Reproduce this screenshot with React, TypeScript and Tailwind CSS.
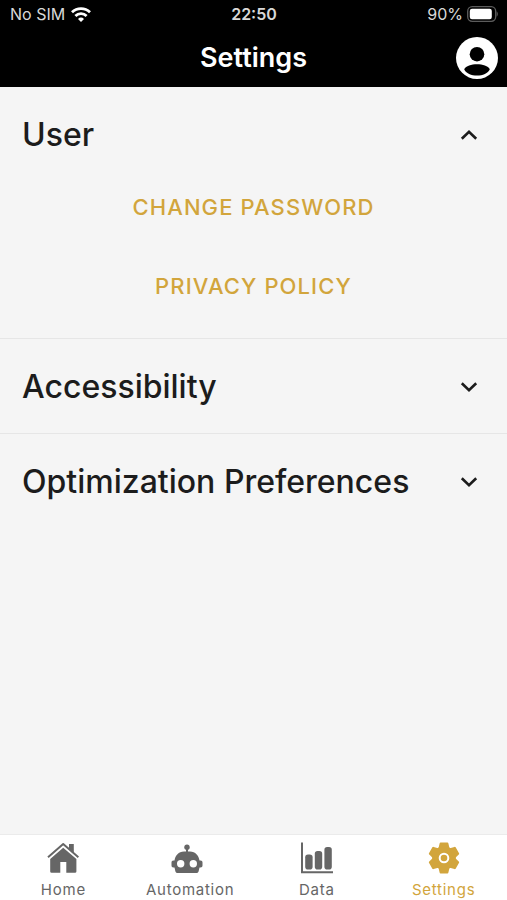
import { useState } from 'react';
import type { ReactNode } from 'react';
import { clsx } from 'clsx';

const WifiIcon = () => (
  <svg viewBox="0 0 20 15" className="h-[15px] w-5" fill="none" stroke="currentColor" strokeWidth="2.8">
    <path d="M1 5.3a13 13 0 0 1 18 0" />
    <path d="M4.4 9a8 8 0 0 1 11.2 0" />
    <path d="M10 15 7 12a4.3 4.3 0 0 1 6 0Z" fill="currentColor" stroke="none" />
  </svg>
);

const BatteryIcon = () => (
  <svg viewBox="0 0 31 16" className="h-4 w-[31px]">
    <rect x="0.7" y="0.7" width="28" height="14.6" rx="4.5" fill="none" stroke="#5c5c5c" strokeWidth="1.3" />
    <rect x="2.8" y="2.8" width="22" height="10.4" rx="2.2" fill="#fff" />
    <path d="M29.6 5.4c1.6.6 1.6 4.6 0 5.2Z" fill="#5c5c5c" />
  </svg>
);

const AccountIcon = () => (
  <svg viewBox="0 0 42 42" className="size-[42px]">
    <circle cx="21" cy="21" r="21" fill="#fff" />
    <circle cx="21" cy="17.2" r="7.3" fill="#000" />
    <path d="M8.2 32.2C11.5 25.7 30.5 25.7 33.8 32.2 30.5 40.6 11.5 40.6 8.2 32.2Z" fill="#000" />
  </svg>
);

const ChevronIcon = ({ open }: { open: boolean }) => (
  <svg
    viewBox="0 0 18 12"
    className={clsx('h-3 w-[18px]', open && 'rotate-180')}
    fill="none"
    stroke="currentColor"
    strokeWidth="2.6"
  >
    <path d="M1.8 2.3 9 9.3l7.2-7" />
  </svg>
);

const HomeIcon = () => (
  <svg viewBox="0 0 32 32" className="size-8" fill="currentColor">
    <path d="M22 2h4.8v9l-4.8-4Z" />
    <path d="M1 15.2 16.2 2 31.4 15.2" fill="none" stroke="currentColor" strokeWidth="2" strokeLinejoin="round" />
    <path d="M16.2 5.8 29.4 17V29.4a1.4 1.4 0 0 1-1.4 1.4H19.3V20H13.3V30.8H4.6a1.4 1.4 0 0 1-1.4-1.4V17Z" />
  </svg>
);

const RobotIcon = () => (
  <svg viewBox="0 0 32 32" className="mr-[6px] size-8" fill="currentColor">
    <circle cx="16" cy="5.2" r="2.7" />
    <path d="M15 7h2v4h-2Z" />
    <path
      fillRule="evenodd"
      d="M13 9.6h6c5.4 0 8.8 4.2 9.5 9h1c1.4 0 2 .7 2 2v3c0 1.3-.6 2-2 2h-1l-.8 3.4c-.4 1.4-1.1 2-2.3 2H6.6c-1.2 0-1.9-.6-2.3-2l-.8-3.4h-1c-1.4 0-2-.7-2-2v-3c0-1.3.6-2 2-2h1C4.2 13.8 7.6 9.6 13 9.6ZM9.7 18a3.7 3.7 0 1 0 0 7.4 3.7 3.7 0 0 0 0-7.4Zm12.6 0a3.7 3.7 0 1 0 0 7.4 3.7 3.7 0 0 0 0-7.4Z"
    />
  </svg>
);

const ChartIcon = () => (
  <svg viewBox="0 0 32 32" className="size-8" fill="currentColor">
    <path d="M0 .5h2V29.2h31v2H0Z" />
    <rect x="4.2" y="12.4" width="7.4" height="15.2" rx="2.8" />
    <rect x="13.8" y="9" width="7.4" height="18.6" rx="2.8" />
    <rect x="23.4" y="5" width="7.4" height="22.6" rx="2.8" />
  </svg>
);

const GearIcon = () => (
  <svg viewBox="0 0 32 32" className="size-8" fill="currentColor">
    <circle cx="16" cy="16" r="11.8" />
    {[0, 60, 120, 180, 240, 300].map((angle) => (
      <path
        key={angle}
        d="M12.6.6h6.8q.8 0 1 .9l1.3 5.5h-11.4l1.3-5.5q.2-.9 1-.9Z"
        transform={`rotate(${angle} 16 16)`}
      />
    ))}
    <circle cx="16" cy="16" r="4.3" fill="none" stroke="#fff" strokeWidth="2" />
  </svg>
);

const tabs = [
  { name: 'Home', icon: HomeIcon },
  { name: 'Automation', icon: RobotIcon },
  { name: 'Data', icon: ChartIcon },
  { name: 'Settings', icon: GearIcon },
];

interface SectionProps {
  title: string;
  open: boolean;
  onToggle: () => void;
  children?: ReactNode;
}

const Section = ({ title, open, onToggle, children }: SectionProps) => (
  <section className="border-b border-[#e6e6e6] last:border-b-0">
    <h2>
      <button
        type="button"
        aria-expanded={open}
        onClick={onToggle}
        className="flex w-full items-center justify-between pt-7 pr-[29px] pb-[26px] pl-[22px] text-left text-[32px] leading-10 font-medium"
      >
        {title}
        <ChevronIcon open={open} />
      </button>
    </h2>
    {open && children}
  </section>
);

export default function App() {
  const [openSections, setOpenSections] = useState(['User']);
  const [activeTab, setActiveTab] = useState('Settings');

  const sectionProps = (title: string) => ({
    title,
    open: openSections.includes(title),
    onToggle: () =>
      setOpenSections((current) =>
        current.includes(title) ? current.filter((item) => item !== title) : [...current, title],
      ),
  });

  return (
    <div className="flex min-h-screen flex-col bg-[#f5f5f5] font-['Inter',sans-serif] text-[#1c1c1c]">
      <header className="bg-black pb-2 text-white">
        <div className="grid grid-cols-3 items-center pt-1 pr-[9px] pl-[10px] text-base leading-5 text-[#d8d8d8]">
          <div className="flex items-center gap-[6px]">
            <span>No SIM</span>
            <span className="text-white">
              <WifiIcon />
            </span>
          </div>
          <span className="text-center font-semibold">22:50</span>
          <div className="flex items-center justify-end gap-1">
            <span>90%</span>
            <BatteryIcon />
          </div>
        </div>
        <div className="grid grid-cols-[1fr_auto_1fr] items-center pt-[13px] pr-[9px] pl-[9px]">
          <h1 className="col-start-2 text-[27px] leading-8 font-semibold">Settings</h1>
          <button type="button" aria-label="Account" className="justify-self-end">
            <AccountIcon />
          </button>
        </div>
      </header>

      <main className="flex-1">
        <Section {...sectionProps('User')}>
          <div className="flex flex-col items-center gap-[27px] pb-[26px]">
            <button type="button" className="px-4 py-3 text-[22px] leading-7 font-medium tracking-wider text-[#d2a53c] uppercase">
              Change password
            </button>
            <button type="button" className="px-4 py-3 text-[22px] leading-7 font-medium tracking-wider text-[#d2a53c] uppercase">
              Privacy policy
            </button>
          </div>
        </Section>
        <Section {...sectionProps('Accessibility')} />
        <Section {...sectionProps('Optimization Preferences')} />
      </main>

      <nav className="grid grid-cols-4 border-t border-[#ebebeb] bg-white">
        {tabs.map(({ name, icon: Icon }) => (
          <button
            key={name}
            type="button"
            onClick={() => setActiveTab(name)}
            className={clsx(
              'flex flex-col items-center gap-[6px] pt-[7px] text-[15px] leading-5 tracking-wider',
              activeTab === name ? 'text-[#d2a53c]' : 'text-[#666666]',
            )}
          >
            <Icon />
            {name}
          </button>
        ))}
      </nav>
    </div>
  );
}
